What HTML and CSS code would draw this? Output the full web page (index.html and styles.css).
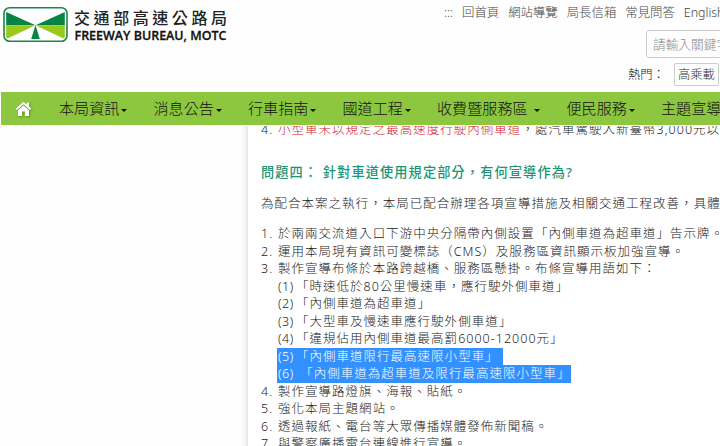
FILE: index.html
```
<!DOCTYPE html>
<html lang="zh-Hant">
<head>
  <meta charset="UTF-8">
  <meta name="viewport" content="width=device-width, initial-scale=1.0">
  <title>交通部高速公路局</title>
  <link rel="stylesheet" href="styles.css">
</head>
<body>
  <header class="header">
    <a class="logo" href="#">
      <svg width="232" height="46" viewBox="0 0 232 46">
        <rect x="4" y="7.7" width="63" height="33.6" rx="5.5" fill="#fff" stroke="#17874a" stroke-width="1.6"/>
        <path d="M6.2 12 L35.5 25.2 H6.2 Z M64.8 12 L35.5 25.2 H64.8 Z" fill="#078343"/>
        <path d="M6.2 25.2 H35.5 L7.5 38.5 L6.2 37.5 Z M64.8 25.2 H35.5 L63.5 38.5 L64.8 37.5 Z" fill="#9bc91b"/>
        <path d="M35.5 25.2 L39.8 39 H31.2 Z" fill="#078343"/>
        <text class="logo-zh" x="74" y="24" textLength="153">交通部高速公路局</text>
        <text class="logo-en" x="74.500" y="39.500" textLength="152" lengthAdjust="spacingAndGlyphs">FREEWAY BUREAU, MOTC</text>
      </svg>
    </a>
    <div class="tools">
      <div class="top-links">
        <a class="dots">:::</a>
        <a>回首頁</a>
        <a>網站導覽</a>
        <a>局長信箱</a>
        <a>常見問答</a>
        <a>English</a>
      </div>
      <div class="search">請輸入關鍵字</div>
      <div class="hot">
        <span>熱門：</span>
        <a class="tag">高乘載</a>
      </div>
    </div>
  </header>

  <nav class="nav">
    <a class="home">
      <svg width="17" height="16" viewBox="0 0 17 16">
        <path d="M8.500 0.800 L0.700 7.700 L1.900 9 L8.500 3.200 L15.100 9 L16.300 7.700 L14 5.600 V1.500 H11.700 V3.600 Z" fill="#fff"/>
        <path d="M8.500 4.500 L3 9.300 V15 H7 V10.500 H10 V15 H14 V9.300 Z" fill="#fff"/>
      </svg>
    </a>
    <a class="menu">本局資訊</a>
    <a class="menu">消息公告</a>
    <a class="menu">行車指南</a>
    <a class="menu">國道工程</a>
    <a class="menu wide">收費暨服務區</a>
    <a class="menu">便民服務</a>
    <a class="menu">主題宣導</a>
  </nav>

  <div class="page">
    <main class="content">
      <div class="row"><span class="num">4.</span><span><em>小型車未以規定之最高速度行駛內側車道</em>，處汽車駕駛人新臺幣3,000元以上</span></div>
      <h2>問題四： 針對車道使用規定部分，有何宣導作為?</h2>
      <p>為配合本案之執行，本局已配合辦理各項宣導措施及相關交通工程改善，具體</p>
      <div class="row"><span class="num">1.</span><span>於兩兩交流道入口下游中央分隔帶內側設置「內側車道為超車道」告示牌。</span></div>
      <div class="row"><span class="num">2.</span><span>運用本局現有資訊可變標誌（CMS）及服務區資訊顯示板加強宣導。</span></div>
      <div class="row"><span class="num">3.</span><span>製作宣導布條於本路跨越橋、服務區懸掛。布條宣導用語如下：</span></div>
      <div class="sub">
        <div><b>(1)</b>「時速低於80公里慢速車，應行駛外側車道」</div>
        <div><b>(2)</b>「內側車道為超車道」</div>
        <div><b>(3)</b>「大型車及慢速車應行駛外側車道」</div>
        <div><b>(4)</b>「違規佔用內側車道最高罰6000-12000元」</div>
        <div class="picked"><b>(5)</b>「內側車道限行最高速限小型車」&nbsp;</div>
        <div class="picked"><b>(6)</b> 「內側車道為超車道及限行最高速限小型車」</div>
      </div>
      <div class="row"><span class="num">4.</span><span>製作宣導路燈旗、海報、貼紙。</span></div>
      <div class="row"><span class="num">5.</span><span>強化本局主題網站。</span></div>
      <div class="row"><span class="num">6.</span><span>透過報紙、電台等大眾傳播媒體發佈新聞稿。</span></div>
      <div class="row"><span class="num">7.</span><span>與警察廣播電台連線進行宣導。</span></div>
    </main>
  </div>
</body>
</html>
```
FILE: styles.css
```
* {
  box-sizing: border-box;
}
body {
  margin: 0;
  height: 446px;
  overflow: hidden;
  background: #fefefe;
  color: #222;
  font-family: "Noto Sans", "Noto Sans CJK TC", sans-serif;
  font-weight: 300;
  white-space: nowrap;
}

.header {
  height: 92px;
  display: flex;
  justify-content: space-between;
  overflow: hidden;
}
.logo svg {
  display: block;
}
.logo-zh {
  font-family: "Noto Sans CJK TC", sans-serif;
  font-size: 16px;
  font-weight: 500;
  fill: #222;
}
.logo-en {
  font-family: "Open Sans", sans-serif;
  font-size: 13.2px;
  font-weight: 600;
  fill: #111;
  stroke: #111;
  stroke-width: 0.3px;
}

.tools {
  width: 276px;
  display: flex;
  flex-direction: column;
}
.top-links {
  display: flex;
  gap: 9px;
  height: 30px;
  line-height: 26px;
  font-size: 12.4px;
  color: #444;
  overflow: hidden;
}
.dots {
  width: 9px;
}
.search {
  width: 120px;
  height: 28px;
  margin-left: 202px;
  padding-left: 6px;
  border: 1px solid #ccc;
  border-radius: 3px;
  line-height: 26px;
  font-size: 12.7px;
  color: #888;
}
.hot {
  display: flex;
  margin: 5px 0 0 184px;
  gap: 9px;
  font-size: 12.3px;
  line-height: 24px;
  color: #111;
}
.tag {
  height: 23px;
  padding: 0 3px;
  border: 1px solid #ccc;
  border-radius: 2px;
  line-height: 22px;
  color: #333;
}

.nav {
  position: relative;
  z-index: 2;
  display: flex;
  height: 34px;
  margin-left: 1px;
  overflow: hidden;
  background: #8dc63f;
  border-bottom: 1px solid #f4f9ec;
  line-height: 33px;
  font-size: 15.1px;
  color: #111;
}
.home {
  flex: none;
  width: 58px;
  padding: 9px 0 0 14px;
  line-height: 0;
  filter: drop-shadow(1px 1px 1px rgba(60, 90, 20, 0.5));
}
.menu {
  flex: none;
  display: flex;
  align-items: center;
  width: 94.5px;
}
.menu.wide {
  width: 129.5px;
}
.menu::after {
  content: "";
  margin: 3px 0 0 2px;
  border: 3.5px solid transparent;
  border-top: 3.5px solid #111;
  border-bottom: 0;
}
.menu.wide::after {
  margin-left: 6px;
}

.page {
  padding-left: 248px;
  margin-top: -5px;
}
.content {
  height: 330px;
  padding-left: 13px;
  background: #fff;
  box-shadow: 0 0 7px rgba(0, 0, 0, 0.2);
  font-size: 12.5px;
  letter-spacing: 1.02px;
  line-height: 17.5px;
}
.content h2 {
  margin: 23px 0 0;
  font-size: 13.2px;
  font-weight: 500;
  letter-spacing: 1.12px;
  line-height: 20px;
  color: #1a9677;
}
.content p {
  margin: 13px 0;
}
.content em {
  font-style: normal;
  color: #d3202f;
}
.row {
  display: flex;
}
.num {
  flex: none;
  width: 17px;
}
.sub {
  margin-left: 16px;
}
.sub b {
  margin-right: 2px;
  padding-left: 1px;
  font-weight: 300;
  letter-spacing: 0.6px;
}
.sub div {
  width: fit-content;
}
.picked {
  background: #3390ff;
  color: #fff;
}
```
